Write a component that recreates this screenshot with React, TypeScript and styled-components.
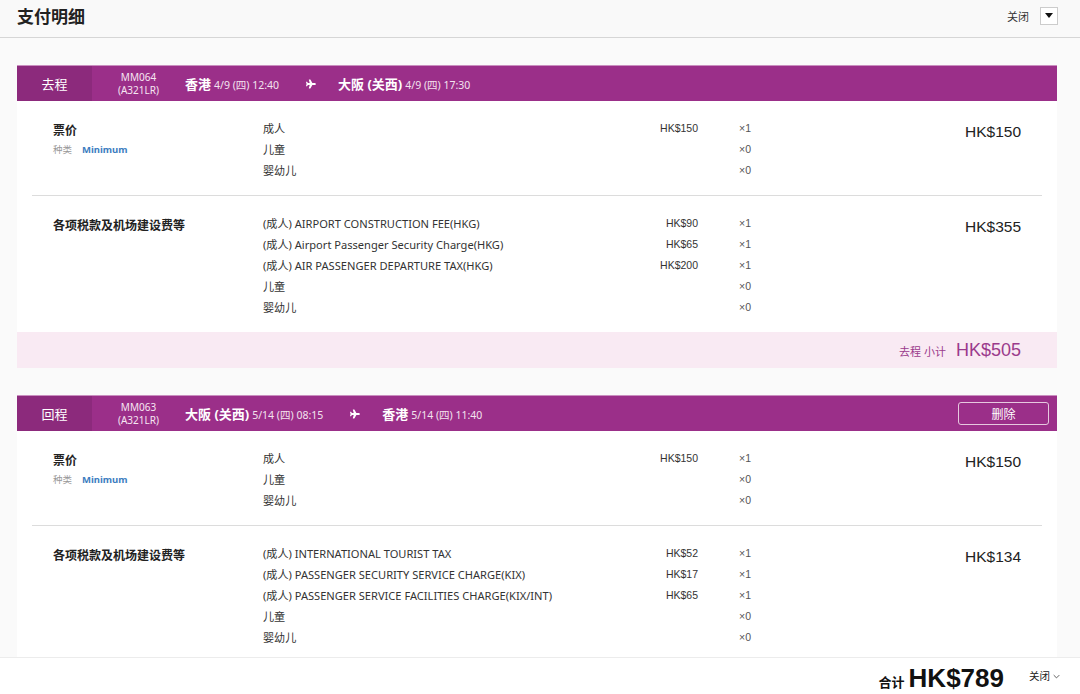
import styled, { createGlobalStyle } from 'styled-components';
import { FaPlane } from 'react-icons/fa';

const GlobalStyle = createGlobalStyle`
  html, body {
    margin: 0;
    padding: 0;
    background: #fafafa;
    font-family: "Noto Sans", "Noto Sans CJK SC", sans-serif;
    color: #333;
  }
  * { box-sizing: border-box; }
`;

const Page = styled.div`
  min-height: 100vh;
  padding-bottom: 60px;
`;

const TopBar = styled.header`
  height: 38px;
  display: flex;
  align-items: center;
  justify-content: space-between;
  padding: 0 22px 0 17px;
  border-bottom: 1px solid #d6d6d6;
  background: #f9f9f9;
`;

const PageTitle = styled.h1`
  margin: 0;
  font-size: 17px;
  font-weight: 700;
  color: #222;
  line-height: 1;
  margin-top: -5px;
`;

const CloseGroup = styled.div`
  display: flex;
  align-items: center;
  gap: 11px;
  margin-top: -6px;
  font-size: 11px;
  color: #333;
`;

const DropBox = styled.span`
  width: 18px;
  height: 18px;
  border: 1px solid #ccc;
  background: #fff;
  display: flex;
  align-items: center;
  justify-content: center;

  &::after {
    content: '';
    border-left: 4px solid transparent;
    border-right: 4px solid transparent;
    border-top: 5px solid #111;
  }
`;

const Main = styled.main`
  padding: 27px 23px 0 17px;
  display: flex;
  flex-direction: column;
  gap: 27px;
`;

const Card = styled.section`
  background: #fff;
`;

const CardHead = styled.div`
  height: 36px;
  background: #9b2f89;
  color: #fff;
  display: flex;
  align-items: center;
  border-top: 1px solid #c98fbf;
`;

const DirTab = styled.div`
  width: 75px;
  height: 100%;
  background: #8c2a7c;
  display: flex;
  align-items: center;
  justify-content: center;
  font-size: 13px;
`;

const FlightNo = styled.div`
  width: 93px;
  text-align: center;
  font-size: 10px;
  line-height: 13px;
  color: #f6e6f2;
`;

const Station = styled.div`
  font-size: 10.5px;
  color: #f3e3ef;
  white-space: nowrap;

  b {
    font-size: 13px;
    font-weight: 700;
    color: #fff;
    margin-right: 3px;
  }
`;

const PlaneIcon = styled(FaPlane)`
  width: 10px;
  height: 10px;
  margin: 0 22px 0 27px;
`;

const DeleteButton = styled.button`
  margin-left: auto;
  margin-right: 8px;
  width: 91px;
  height: 23px;
  border: 1px solid #e6c9df;
  border-radius: 3px;
  background: transparent;
  color: #fff;
  font-family: inherit;
  font-size: 12px;
  cursor: pointer;
`;

const Section = styled.div<{ $last?: boolean }>`
  margin: 0 15px;
  padding: 16px 21px 15px;
  display: flex;
  align-items: flex-start;
  border-bottom: ${(p) => (p.$last ? 'none' : '1px solid #dcdcdc')};
`;

const LabelCol = styled.div`
  width: 210px;
  padding-top: 5px;
`;

const LabelTitle = styled.div`
  font-size: 12px;
  font-weight: 700;
  color: #222;
  line-height: 18px;
`;

const FareType = styled.div`
  margin-top: 2px;
  font-size: 9.5px;
  color: #999;

  span {
    margin-left: 10px;
    color: #3c7dbf;
    font-weight: 700;
  }
`;

const Lines = styled.div`
  width: 527px;
`;

const Line = styled.div`
  display: grid;
  grid-template-columns: 355px 80px 1fr;
  height: 21px;
  align-items: center;
  font-size: 11.1px;
`;

const Desc = styled.span`
  color: #333;
  white-space: nowrap;
`;

const UnitPrice = styled.span`
  text-align: right;
  font-family: "Liberation Sans", Arial, sans-serif;
  font-size: 10.5px;
  color: #333;
`;

const Qty = styled.span`
  padding-left: 41px;
  font-family: "Liberation Sans", Arial, sans-serif;
  font-size: 10.5px;
  color: #555;
`;

const SectionTotal = styled.div`
  flex: 1;
  text-align: right;
  font-family: "Liberation Sans", Arial, sans-serif;
  font-size: 15.5px;
  color: #222;
  padding-top: 6px;
`;

const Subtotal = styled.div`
  height: 36px;
  background: #f9eaf3;
  display: flex;
  align-items: center;
  justify-content: flex-end;
  padding-right: 36px;
  gap: 10px;
  color: #9b3a8c;
`;

const SubLabel = styled.span`
  font-size: 11px;
  padding-top: 1px;
`;

const SubAmount = styled.span`
  font-family: "Liberation Sans", Arial, sans-serif;
  font-size: 18px;
`;

const BottomBar = styled.footer`
  position: fixed;
  left: 0;
  right: 0;
  bottom: 0;
  height: 37px;
  background: #fff;
  border-top: 1px solid #ececec;
  display: flex;
  align-items: baseline;
  justify-content: flex-end;
  padding: 5px 20px 0 0;
  z-index: 2;
`;

const GrandLabel = styled.span`
  font-size: 13px;
  font-weight: 700;
  color: #111;
  margin-right: 4px;
`;

const GrandAmount = styled.span`
  font-family: "Liberation Sans", Arial, sans-serif;
  font-size: 26px;
  font-weight: 700;
  color: #111;
  margin-right: 25px;
`;

const FooterClose = styled.span`
  align-self: center;
  margin-top: -6px;
  font-size: 10.5px;
  color: #222;

  svg {
    width: 7px;
    height: 7px;
    margin-left: 3px;
  }
`;

type Item = { desc: string; price?: string; qty: string };

type Block = { label: string; fare?: boolean; items: Item[]; total: string };

type Leg = {
  dir: string;
  no: string;
  craft: string;
  from: [string, string];
  to: [string, string];
  removable?: boolean;
  blocks: Block[];
  subtotal: string;
};

const legs: Leg[] = [
  {
    dir: '去程',
    no: 'MM064',
    craft: '(A321LR)',
    from: ['香港', '4/9 (四) 12:40'],
    to: ['大阪 (关西)', '4/9 (四) 17:30'],
    blocks: [
      {
        label: '票价',
        fare: true,
        total: 'HK$150',
        items: [
          { desc: '成人', price: 'HK$150', qty: '×1' },
          { desc: '儿童', qty: '×0' },
          { desc: '婴幼儿', qty: '×0' },
        ],
      },
      {
        label: '各项税款及机场建设费等',
        total: 'HK$355',
        items: [
          { desc: '(成人) AIRPORT CONSTRUCTION FEE(HKG)', price: 'HK$90', qty: '×1' },
          { desc: '(成人) Airport Passenger Security Charge(HKG)', price: 'HK$65', qty: '×1' },
          { desc: '(成人) AIR PASSENGER DEPARTURE TAX(HKG)', price: 'HK$200', qty: '×1' },
          { desc: '儿童', qty: '×0' },
          { desc: '婴幼儿', qty: '×0' },
        ],
      },
    ],
    subtotal: 'HK$505',
  },
  {
    dir: '回程',
    no: 'MM063',
    craft: '(A321LR)',
    from: ['大阪 (关西)', '5/14 (四) 08:15'],
    to: ['香港', '5/14 (四) 11:40'],
    removable: true,
    blocks: [
      {
        label: '票价',
        fare: true,
        total: 'HK$150',
        items: [
          { desc: '成人', price: 'HK$150', qty: '×1' },
          { desc: '儿童', qty: '×0' },
          { desc: '婴幼儿', qty: '×0' },
        ],
      },
      {
        label: '各项税款及机场建设费等',
        total: 'HK$134',
        items: [
          { desc: '(成人) INTERNATIONAL TOURIST TAX', price: 'HK$52', qty: '×1' },
          { desc: '(成人) PASSENGER SECURITY SERVICE CHARGE(KIX)', price: 'HK$17', qty: '×1' },
          { desc: '(成人) PASSENGER SERVICE FACILITIES CHARGE(KIX/INT)', price: 'HK$65', qty: '×1' },
          { desc: '儿童', qty: '×0' },
          { desc: '婴幼儿', qty: '×0' },
        ],
      },
    ],
    subtotal: 'HK$284',
  },
];

const LegCard = ({ leg }: { leg: Leg }) => (
  <Card>
    <CardHead>
      <DirTab>{leg.dir}</DirTab>
      <FlightNo>
        {leg.no}
        <br />
        {leg.craft}
      </FlightNo>
      <Station>
        <b>{leg.from[0]}</b>
        {leg.from[1]}
      </Station>
      <PlaneIcon />
      <Station>
        <b>{leg.to[0]}</b>
        {leg.to[1]}
      </Station>
      {leg.removable && <DeleteButton>删除</DeleteButton>}
    </CardHead>

    {leg.blocks.map((block, i) => (
      <Section key={block.label} $last={i === leg.blocks.length - 1}>
        <LabelCol>
          <LabelTitle>{block.label}</LabelTitle>
          {block.fare && (
            <FareType>
              种类<span>Minimum</span>
            </FareType>
          )}
        </LabelCol>
        <Lines>
          {block.items.map((item) => (
            <Line key={item.desc}>
              <Desc>{item.desc}</Desc>
              <UnitPrice>{item.price}</UnitPrice>
              <Qty>{item.qty}</Qty>
            </Line>
          ))}
        </Lines>
        <SectionTotal>{block.total}</SectionTotal>
      </Section>
    ))}

    <Subtotal>
      <SubLabel>{leg.dir} 小计</SubLabel>
      <SubAmount>{leg.subtotal}</SubAmount>
    </Subtotal>
  </Card>
);

export default function App() {
  return (
    <>
      <GlobalStyle />
      <Page>
        <TopBar>
          <PageTitle>支付明细</PageTitle>
          <CloseGroup>
            关闭
            <DropBox />
          </CloseGroup>
        </TopBar>

        <Main>
          {legs.map((leg) => (
            <LegCard key={leg.no} leg={leg} />
          ))}
        </Main>

        <BottomBar>
          <GrandLabel>合计</GrandLabel>
          <GrandAmount>HK$789</GrandAmount>
          <FooterClose>
            关闭
            <svg viewBox="0 0 10 10" fill="none" stroke="#444" strokeWidth="1.2">
              <path d="M1 3l4 4 4-4" />
            </svg>
          </FooterClose>
        </BottomBar>
      </Page>
    </>
  );
}
